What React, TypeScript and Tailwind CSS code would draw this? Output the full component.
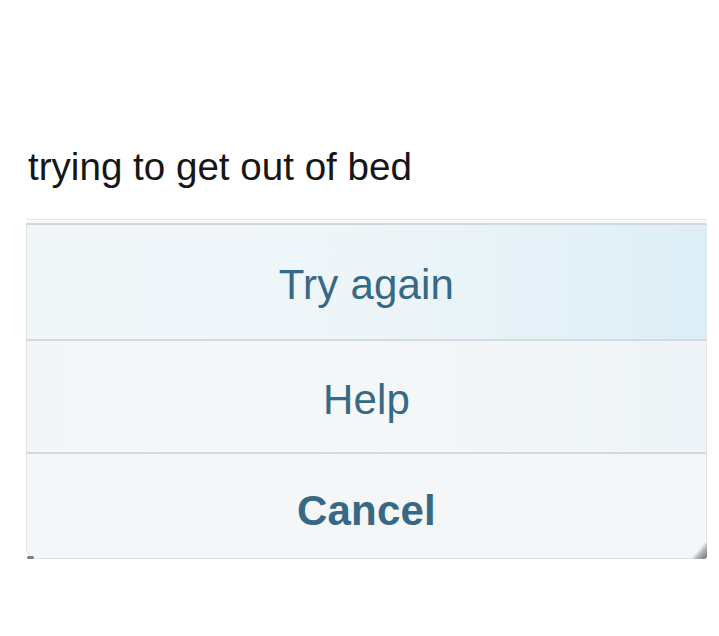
import React from 'react';

const rows = [
  { label: 'Try again', bold: false, h: 'h-[116px] pt-[6px]', bg: 'bg-gradient-to-r from-[#f1f6f9] via-[#eef5f9] to-[#ddeef6]' },
  { label: 'Help', bold: false, h: 'h-[113px] pt-[6px]', bg: 'bg-gradient-to-r from-[#f3f6f8] via-[#f5f7f8] to-[#eef4f7]' },
  { label: 'Cancel', bold: true, h: 'h-[104px] pt-[10px]', bg: 'bg-[#f5f6f7]' },
];

export default function App() {
  return (
    <div className="w-[719px] h-[636px] bg-white overflow-hidden" style={{ fontFamily: '"Liberation Sans", Arial, sans-serif' }}>
      <div className="pt-[145px] pl-[28px]">
        <h1 className="text-[38.6px] leading-[44px] font-normal text-[#161616]">trying to get out of bed</h1>
      </div>

      {/* action sheet */}
      <div className="relative mt-[30px] ml-[26px] w-[681px]">
        <div className="h-[6px] border-t border-[#e6e8ea] border-b-2 border-b-[#d4d8db] bg-[#f7f8f9]" />
        <div className="flex flex-col border-x border-b border-[#dfe3e5] rounded-b-[10px] overflow-hidden">
          {rows.map((row, i) => (
            <div
              key={row.label}
              className={`${row.h} ${row.bg} flex items-center justify-center ${i < rows.length - 1 ? 'border-b-2 border-[#d6dadd]' : ''}`}
            >
              <span className={`text-[42px] leading-none text-[#356985] ${row.bold ? 'font-bold' : 'font-normal'} tracking-[0.2px]`}>
                {row.label}
              </span>
            </div>
          ))}
        </div>
        {/* curled corner shadows */}
        <div className="absolute right-0 bottom-0 w-[14px] h-[16px] bg-gradient-to-tl from-[#6f7275] via-[#b5b8ba] via-40% to-transparent to-60% rounded-br-[3px]" />
        <div className="absolute left-[1px] bottom-0 w-[7px] h-[3px] bg-[#7d8185] rounded-full" />
      </div>
    </div>
  );
}
